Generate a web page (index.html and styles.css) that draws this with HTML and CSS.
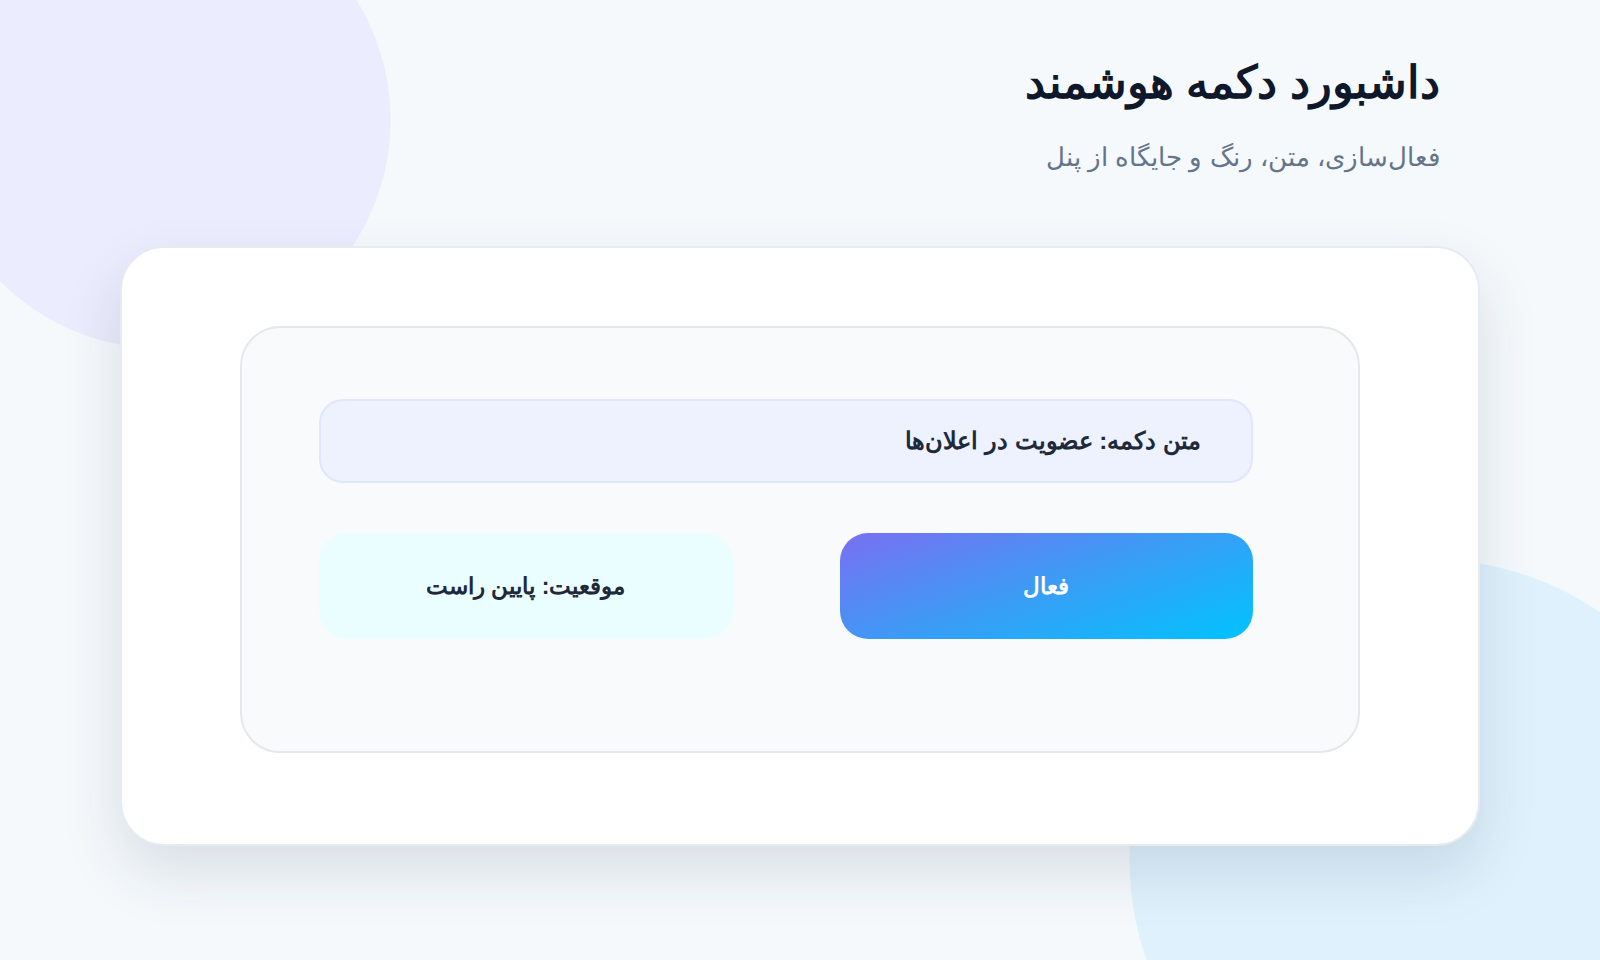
FILE: index.html
```html
<!DOCTYPE html>
<html lang="fa" dir="rtl">
<head>
    <meta charset="UTF-8">
    <meta name="viewport" content="width=device-width, initial-scale=1.0">
    <title>داشبورد دکمه هوشمند</title>
    <link rel="stylesheet" href="styles.css">
</head>
<body>
    <main class="page">
        <header class="page__header">
            <h1 class="page__title">داشبورد دکمه هوشمند</h1>
            <p class="page__subtitle">فعال‌سازی، متن، رنگ و جایگاه از پنل</p>
        </header>

        <section class="card">
            <div class="panel">
                <div class="field">متن دکمه: عضویت در اعلان‌ها</div>
                <div class="actions">
                    <button type="button" class="btn btn_active">فعال</button>
                    <button type="button" class="btn btn_place">موقعیت: پایین راست</button>
                </div>
            </div>
        </section>
    </main>
</body>
</html>
```

FILE: styles.css
```css
* {
    box-sizing: border-box;
}
html,
body {
    height: 100%;
}
body {
    margin: 0;
    overflow: hidden;
    background:
        radial-gradient(circle at 162px 120px, #ebecfd 228px, transparent 229px),
        radial-gradient(circle at 1430px 860px, #dff1fc 300px, transparent 301px),
        #f5f9fc;
    font-family: "Liberation Sans", sans-serif;
    color: #0f172a;
}
.page {
    width: 1360px;
    margin: 0 auto;
    padding-top: 55px;
}
.page__header {
    padding: 0 40px;
}
.page__title {
    margin: 0;
    font-size: 45px;
    line-height: 56px;
    font-weight: 800;
    color: #0f172a;
}
.page__subtitle {
    margin: 29px 0 0;
    font-size: 26px;
    line-height: 34px;
    color: #64748b;
}
.card {
    margin-top: 72px;
    background-color: #fff;
    border: 2px solid #e6ebf2;
    border-radius: 44px;
    padding: 78px 118px 91px;
    box-shadow: 0 26px 60px rgba(30, 50, 80, 0.13);
}
.panel {
    background-color: #f8fafc;
    border: 2px solid #e5e7eb;
    border-radius: 40px;
    padding: 71px 105px 112px 77px;
}
.field {
    height: 84px;
    display: flex;
    align-items: center;
    padding: 0 50px;
    background-color: #eef2fe;
    border: 2px solid #e0e6fb;
    border-radius: 24px;
    font-size: 24px;
    font-weight: 800;
    color: #1e293b;
}
.actions {
    display: flex;
    gap: 107px;
    margin-top: 50px;
}
.btn {
    flex: 1;
    height: 106px;
    border: none;
    border-radius: 28px;
    font-family: inherit;
    font-size: 23px;
    font-weight: 800;
    cursor: pointer;
}
.btn_active {
    background: linear-gradient(160deg, #7a6ff2 0%, #3b9cf5 50%, #00c3ff 100%);
    color: #fff;
}
.btn_place {
    background-color: #ebfeff;
    color: #1e293b;
}
```
